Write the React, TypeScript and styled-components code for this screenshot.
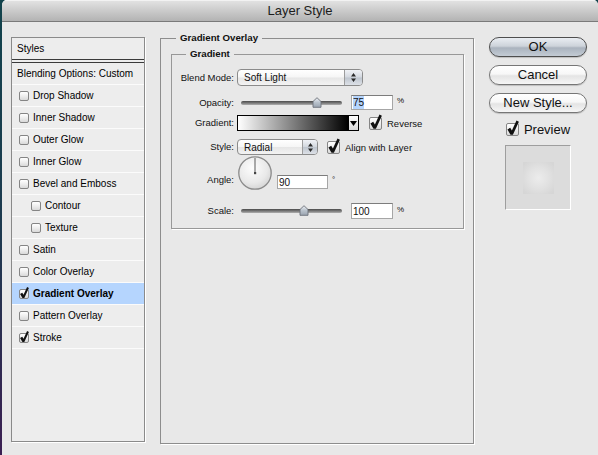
import React from 'react';
import styled, { createGlobalStyle } from 'styled-components';

const GlobalStyle = createGlobalStyle`
  html, body {
    margin: 0;
    padding: 0;
    background: #173a47;
  }
  body {
    font-family: "Liberation Sans", Arial, sans-serif;
    color: #111;
  }
  #root {
    width: 598px;
    height: 455px;
    overflow: hidden;
  }
`;

type Effect = {
  name: string;
  checked?: boolean;
  nested?: boolean;
  active?: boolean;
};

const effects: Effect[] = [
  { name: 'Drop Shadow' },
  { name: 'Inner Shadow' },
  { name: 'Outer Glow' },
  { name: 'Inner Glow' },
  { name: 'Bevel and Emboss' },
  { name: 'Contour', nested: true },
  { name: 'Texture', nested: true },
  { name: 'Satin' },
  { name: 'Color Overlay' },
  { name: 'Gradient Overlay', checked: true, active: true },
  { name: 'Pattern Overlay' },
  { name: 'Stroke', checked: true },
];

// slider thumb placement, 0..1 along the track
const fraction = (value: number, min: number, max: number) => (value - min) / (max - min);

function CheckBox({ size, checked }: { size: number; checked?: boolean }) {
  return (
    <Box $size={size}>
      {checked && (
        <Tick width={size} height={size} viewBox="0 0 13 13">
          <polygon points="1.4,6.4 4.2,4.8 5.9,7.4 10.5,-2.6 12.9,-1.3 6.9,11.7 4.5,11.7" fill="#111" />
        </Tick>
      )}
    </Box>
  );
}

function Stepper({ width }: { width: number }) {
  return (
    <StepperCell $w={width}>
      <svg width="5" height="9" viewBox="0 0 5 9">
        <path d="M2.5 0 L5 3.4 H0 Z M0 5.6 H5 L2.5 9 Z" fill="#2a2a2a" />
      </svg>
    </StepperCell>
  );
}

function Slider({ at }: { at: number }) {
  return (
    <SliderBox>
      <Track />
      <Thumb width="10" height="11" viewBox="0 0 10 11" style={{ left: 4 + at * 101 }}>
        <defs>
          <linearGradient id="thumbFill" x1="0" y1="0" x2="0" y2="1">
            <stop offset="0" stopColor="#eef1f5" />
            <stop offset="0.5" stopColor="#b9c2cc" />
            <stop offset="1" stopColor="#9aa4b0" />
          </linearGradient>
        </defs>
        <path d="M1 4.5 L5 0.7 L9 4.5 V10.3 H1 Z" fill="url(#thumbFill)" stroke="#6b7179" strokeWidth="0.9" />
      </Thumb>
    </SliderBox>
  );
}

function Dial({ angle }: { angle: number }) {
  const rad = (angle * Math.PI) / 180;
  const x = 17 + Math.cos(rad) * 15;
  const y = 17 - Math.sin(rad) * 15;
  return (
    <svg width="34" height="34" viewBox="0 0 34 34">
      <defs>
        <radialGradient id="dialFill" cx="0.42" cy="0.35" r="0.7">
          <stop offset="0" stopColor="#fdfdfd" />
          <stop offset="0.65" stopColor="#e9e9e9" />
          <stop offset="1" stopColor="#d2d2d2" />
        </radialGradient>
      </defs>
      <circle cx="17" cy="17" r="16.2" fill="url(#dialFill)" stroke="#8a8a8a" strokeWidth="1.3" />
      <line x1="17" y1="17" x2={x} y2={y} stroke="#5a5a5a" strokeWidth="1" />
      <rect x="16" y="16" width="2.2" height="2.2" fill="#454545" />
    </svg>
  );
}

export default function App() {
  return (
    <Desktop>
      <GlobalStyle />
      <Window>
        <TitleBar>Layer Style</TitleBar>
        <Body>
          <Sidebar>
            <SideHeader>Styles</SideHeader>
            <SideRow $pad={5}>Blending Options: Custom</SideRow>
            {effects.map((fx) => (
              <SideRow key={fx.name} $pad={fx.nested ? 19 : 7} $active={fx.active}>
                <CheckBox size={10} checked={fx.checked} />
                {fx.name}
              </SideRow>
            ))}
          </Sidebar>

          <Group $w={314} $h={412}>
            <Caption $inset={15}>Gradient Overlay</Caption>
            <InnerGroup>
              <Caption $inset={14}>Gradient</Caption>

              <Row $top={9} $h={17}>
                <Label>Blend Mode:</Label>
                <Select $w={126}>
                  <SelectText>Soft Light</SelectText>
                  <Stepper width={17} />
                </Select>
              </Row>

              <Row $top={9} $h={15}>
                <Label>Opacity:</Label>
                <Slider at={fraction(75, 0, 100)} />
                <Field $w={42}>
                  <Selection>75</Selection>
                </Field>
                <Unit $top={1}>%</Unit>
              </Row>

              <Row $top={5} $h={16}>
                <Label>Gradient:</Label>
                <Swatch>
                  <Ramp />
                  <RampArrow>
                    <svg width="7" height="5" viewBox="0 0 7 5">
                      <path d="M0 0 H7 L3.5 5 Z" fill="#000" />
                    </svg>
                  </RampArrow>
                </Swatch>
                <Option $gap={10}>
                  <CheckBox size={13} checked />
                  Reverse
                </Option>
              </Row>

              <Row $top={8} $h={16}>
                <Label>Style:</Label>
                <Select $w={81}>
                  <SelectText>Radial</SelectText>
                  <Stepper width={14} />
                </Select>
                <Option $gap={9}>
                  <CheckBox size={13} checked />
                  Align with Layer
                </Option>
              </Row>

              <Row $top={1} $h={34} $align="flex-end">
                <Label $bottom={4}>Angle:</Label>
                <DialSlot>
                  <Dial angle={90} />
                </DialSlot>
                <Field $w={51} $h={14} $bottom={1} $space={5}>
                  90
                </Field>
                <Unit $top={19}>°</Unit>
              </Row>

              <Row $top={13} $h={16}>
                <Label>Scale:</Label>
                <Slider at={fraction(100, 10, 155)} />
                <Field $w={42}>100</Field>
                <Unit $top={2}>%</Unit>
              </Row>
            </InnerGroup>
          </Group>

          <Actions>
            <PushButton $primary>OK</PushButton>
            <PushButton>Cancel</PushButton>
            <PushButton>New Style...</PushButton>
            <PreviewToggle>
              <CheckBox size={13} checked />
              Preview
            </PreviewToggle>
            <PreviewWell>
              <PreviewSwatch />
            </PreviewWell>
          </Actions>
        </Body>
      </Window>
    </Desktop>
  );
}

const Desktop = styled.div`
  width: 598px;
  height: 455px;
  box-sizing: border-box;
  padding-left: 2px;
  background: linear-gradient(180deg, #12434c 0%, #1d3a4f 50%, #3b1f52 100%);
`;

const Window = styled.div`
  width: 596px;
  height: 455px;
  display: flex;
  flex-direction: column;
  background: #e8e8e8;
  border-radius: 5px 5px 0 0;
  overflow: hidden;
`;

const TitleBar = styled.div`
  height: 21px;
  flex: none;
  display: flex;
  align-items: center;
  justify-content: center;
  border-bottom: 1px solid #7a7a7a;
  background: linear-gradient(#e4e4e4 0%, #cbcbcb 50%, #b3b3b3 100%);
  box-shadow: inset 0 1px 0 #f2f2f2;
  font-size: 13px;
  color: #1c1c1c;
`;

const Body = styled.div`
  display: flex;
  align-items: flex-start;
  gap: 15px;
  padding: 10px 0 0 9px;
`;

const Sidebar = styled.div`
  margin-top: 5px;
  width: 134px;
  height: 405px;
  flex: none;
  box-sizing: border-box;
  display: flex;
  flex-direction: column;
  border: 1px solid #8a8a8a;
  box-shadow: 1px 1px 0 #ffffff;
  background: #ededed;
`;

const SideHeader = styled.div`
  height: 21px;
  display: flex;
  align-items: center;
  padding-left: 5px;
  border-bottom: 4px double #3a3a3a;
  font-size: 10px;
  color: #000;
`;

const SideRow = styled.div<{ $pad: number; $active?: boolean }>`
  height: 21px;
  display: flex;
  align-items: center;
  gap: 4px;
  padding-left: ${(p) => p.$pad}px;
  border-bottom: 1px solid #fbfbfb;
  background: ${(p) => (p.$active ? '#b5d5fe' : 'transparent')};
  font-size: 10px;
  font-weight: ${(p) => (p.$active ? 'bold' : 'normal')};
  color: #000;
  white-space: nowrap;
`;

const Box = styled.span<{ $size: number }>`
  position: relative;
  flex: none;
  width: ${(p) => p.$size}px;
  height: ${(p) => p.$size}px;
  box-sizing: border-box;
  border: 1px solid #858585;
  border-radius: 2px;
  background: linear-gradient(#ffffff 0%, #eeeeee 50%, #d9d9d9 100%);
`;

const Tick = styled.svg`
  position: absolute;
  left: -1px;
  top: -1px;
  overflow: visible;
`;

const Group = styled.fieldset<{ $w: number; $h: number }>`
  margin: 0;
  padding: 0;
  min-width: 0;
  flex: none;
  box-sizing: border-box;
  width: ${(p) => p.$w}px;
  height: ${(p) => p.$h}px;
  border: 1px solid #8d8d8d;
  box-shadow: 1px 1px 0 #ffffff;
`;

const InnerGroup = styled.fieldset`
  margin: 4px 9px 0 10px;
  padding: 0 0 9px 0;
  min-width: 0;
  display: flex;
  flex-direction: column;
  border: 1px solid #989898;
  box-shadow: 1px 1px 0 #ffffff;
`;

const Caption = styled.legend<{ $inset: number }>`
  margin-left: ${(p) => p.$inset}px;
  padding: 0 4px;
  font-size: 9.7px;
  font-weight: bold;
  line-height: 12px;
  color: #111;
`;

const Row = styled.div<{ $top: number; $h: number; $align?: string }>`
  display: flex;
  align-items: ${(p) => p.$align ?? 'center'};
  margin-top: ${(p) => p.$top}px;
  height: ${(p) => p.$h}px;
`;

const Label = styled.span<{ $bottom?: number }>`
  flex: none;
  width: 62px;
  margin-right: 3px;
  margin-bottom: ${(p) => p.$bottom ?? 0}px;
  text-align: right;
  font-size: 9.5px;
  line-height: 12px;
  white-space: nowrap;
`;

const Select = styled.span<{ $w: number }>`
  flex: none;
  width: ${(p) => p.$w}px;
  height: 100%;
  box-sizing: border-box;
  display: flex;
  border: 1px solid #8b8b8b;
  border-radius: 4px;
  overflow: hidden;
  background: linear-gradient(#ffffff 0%, #f6f6f6 48%, #e6e6e6 52%, #f3f3f3 100%);
`;

const SelectText = styled.span`
  flex: 1;
  display: flex;
  align-items: center;
  padding-left: 6px;
  font-size: 10px;
`;

const StepperCell = styled.span<{ $w: number }>`
  width: ${(p) => p.$w}px;
  flex: none;
  display: flex;
  align-items: center;
  justify-content: center;
  border-left: 1px solid #9c9c9c;
  background: linear-gradient(#f0f2f6 0%, #d3d8df 48%, #bec5ce 52%, #dde1e7 100%);
`;

const SliderBox = styled.span`
  position: relative;
  flex: none;
  width: 110px;
  height: 100%;
  display: flex;
  align-items: center;
  padding: 0 5px 0 4px;
  box-sizing: border-box;
`;

const Track = styled.span`
  flex: 1;
  height: 4px;
  border-radius: 2px;
  background: linear-gradient(#4a4a4a 0%, #7d7d7d 55%, #b0b0b0 100%);
`;

const Thumb = styled.svg`
  position: absolute;
  top: 50%;
  margin-top: -6px;
  margin-left: -5px;
`;

const Field = styled.span<{ $w: number; $h?: number; $bottom?: number; $space?: number }>`
  flex: none;
  width: ${(p) => p.$w}px;
  height: ${(p) => (p.$h ? `${p.$h}px` : '100%')};
  margin-left: ${(p) => p.$space ?? 4}px;
  margin-bottom: ${(p) => p.$bottom ?? 0}px;
  box-sizing: border-box;
  display: flex;
  align-items: center;
  padding-left: 1px;
  background: #ffffff;
  border: 1px solid #a6a6a6;
  border-top-color: #7c7c7c;
  font-size: 10px;
`;

const Selection = styled.span`
  background: #b5d5fe;
  padding: 1px 0;
`;

const Unit = styled.span<{ $top: number }>`
  align-self: flex-start;
  margin-top: ${(p) => p.$top}px;
  margin-left: 4px;
  font-size: 8px;
  line-height: 10px;
`;

const Swatch = styled.span`
  flex: none;
  width: 122px;
  height: 100%;
  box-sizing: border-box;
  display: flex;
  border: 1px solid #000;
`;

const Ramp = styled.span`
  flex: 1;
  background: linear-gradient(to right, #ffffff, #000000);
`;

const RampArrow = styled.span`
  width: 9px;
  flex: none;
  display: flex;
  align-items: center;
  justify-content: center;
  border-left: 1px solid #000;
  background: linear-gradient(#fdfdfd, #d8d8d8);
`;

const Option = styled.span<{ $gap: number }>`
  display: flex;
  align-items: center;
  gap: 5px;
  margin-left: ${(p) => p.$gap}px;
  font-size: 9.5px;
  white-space: nowrap;
`;

const DialSlot = styled.span`
  flex: none;
  display: flex;
  margin-left: 1px;
`;

const Actions = styled.div`
  margin-top: 5px;
  width: 98px;
  flex: none;
  display: flex;
  flex-direction: column;
  align-items: center;
  gap: 8px;
`;

const PushButton = styled.button<{ $primary?: boolean }>`
  width: 98px;
  height: 20px;
  padding: 0;
  border-radius: 10px;
  border: 1px solid ${(p) => (p.$primary ? '#4e4e4e' : '#767676')};
  background: ${(p) =>
    p.$primary
      ? 'linear-gradient(#e9edf2 0%, #cdd3da 45%, #aab3be 55%, #c3cbd4 100%)'
      : 'linear-gradient(#ffffff 0%, #f7f7f7 45%, #e4e4e4 55%, #f6f6f6 100%)'};
  box-shadow: 0 1px 1px rgba(0, 0, 0, 0.18);
  font-family: "Liberation Sans", Arial, sans-serif;
  font-size: 13px;
  line-height: 18px;
  color: #111;
`;

const PreviewToggle = styled.div`
  margin-top: 1px;
  display: flex;
  align-items: center;
  gap: 5px;
  font-size: 13px;
`;

const PreviewWell = styled.div`
  width: 66px;
  height: 65px;
  box-sizing: border-box;
  display: flex;
  align-items: center;
  justify-content: center;
  background: #dcdcdc;
  border: 1px solid #ffffff;
  border-top-color: #9e9e9e;
  border-left-color: #9e9e9e;
`;

const PreviewSwatch = styled.div`
  width: 31px;
  height: 32px;
  background: radial-gradient(circle at 50% 50%, #ececec 0%, #e2e2e2 45%, #d6d6d6 90%);
`;
